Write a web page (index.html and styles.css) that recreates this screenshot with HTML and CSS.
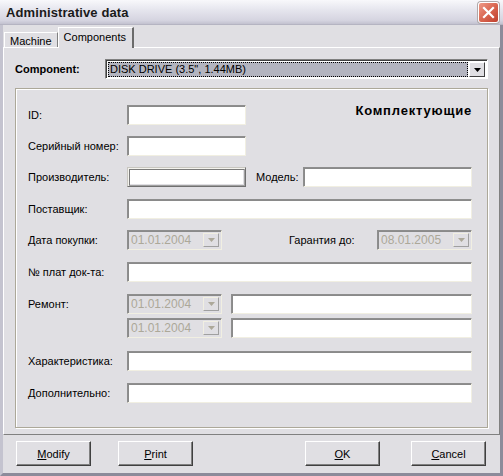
FILE: index.html
```html
<!DOCTYPE html>
<html>
<head>
<meta charset="utf-8">
<link rel="stylesheet" href="styles.css">
</head>
<body>
<div class="window">
  <div class="titlebar">
    <span class="title">Administrative data</span>
    <span class="close"><svg width="13" height="13" viewBox="0 0 13 13"><path d="M2 2 L11 11 M11 2 L2 11" stroke="#fff" stroke-width="2.2" stroke-linecap="square"/></svg></span>
  </div>
  <div class="tabs">
    <div class="tab">Machine</div>
    <div class="tab active">Components</div>
  </div>
  <div class="panel">
    <div class="comp-row">
      <span class="comp-label">Component:</span>
      <div class="combo">
        <div class="combo-val"><span class="focus">DISK DRIVE (3.5", 1.44MB)</span></div>
        <div class="combo-btn"><svg width="7" height="4" viewBox="0 0 7 4"><path d="M0 0H7L3.5 4Z" fill="#000"/></svg></div>
      </div>
    </div>
    <div class="group">
      <div class="row">
        <span class="lbl">ID:</span>
        <div class="inp w-short"></div>
        <span class="heading">Комплектующие</span>
      </div>
      <div class="row t11">
        <span class="lbl">Серийный номер:</span>
        <div class="inp w-short"></div>
      </div>
      <div class="row t11">
        <span class="lbl">Производитель:</span>
        <div class="inp w-short raised"></div>
        <span class="lbl2 model">Модель:</span>
        <div class="inp grow"></div>
      </div>
      <div class="row">
        <span class="lbl">Поставщик:</span>
        <div class="inp grow"></div>
      </div>
      <div class="row t11">
        <span class="lbl">Дата покупки:</span>
        <div class="date"><span class="dtxt">01.01.2004</span><span class="dbtn"><svg width="7" height="4" viewBox="0 0 7 4"><path d="M0 0H7L3.5 4Z" fill="#aca899"/></svg></span></div>
        <span class="lbl2 warranty">Гарантия до:</span>
        <div class="date"><span class="dtxt">08.01.2005</span><span class="dbtn"><svg width="7" height="4" viewBox="0 0 7 4"><path d="M0 0H7L3.5 4Z" fill="#aca899"/></svg></span></div>
      </div>
      <div class="row">
        <span class="lbl">№ плат док-та:</span>
        <div class="inp grow"></div>
      </div>
      <div class="row">
        <span class="lbl">Ремонт:</span>
        <div class="date"><span class="dtxt">01.01.2004</span><span class="dbtn"><svg width="7" height="4" viewBox="0 0 7 4"><path d="M0 0H7L3.5 4Z" fill="#aca899"/></svg></span></div>
        <div class="inp grow repair"></div>
      </div>
      <div class="row t4">
        <span class="lbl"></span>
        <div class="date"><span class="dtxt">01.01.2004</span><span class="dbtn"><svg width="7" height="4" viewBox="0 0 7 4"><path d="M0 0H7L3.5 4Z" fill="#aca899"/></svg></span></div>
        <div class="inp grow repair"></div>
      </div>
      <div class="row t13">
        <span class="lbl">Характеристика:</span>
        <div class="inp grow"></div>
      </div>
      <div class="row">
        <span class="lbl">Дополнительно:</span>
        <div class="inp grow"></div>
      </div>
    </div>
  </div>
  <div class="footer">
    <button class="btn"><u>M</u>odify</button>
    <button class="btn print"><u>P</u>rint</button>
    <button class="btn ok"><u>O</u>K</button>
    <button class="btn cancel"><u>C</u>ancel</button>
  </div>
</div>
</body>
</html>
```
FILE: styles.css
```css
html, body {
  margin: 0;
  padding: 0;
  background: #e0dfe3;
}
.window {
  width: 503px;
  height: 476px;
  box-sizing: border-box;
  background: #e0dfe3;
  border-left: 3px solid #c4c3cf;
  border-right: 3px solid #8c8b9a;
  border-bottom: 3px solid #8c8b9a;
  font-family: "Liberation Sans", Arial, sans-serif;
  font-size: 11px;
  color: #000;
  display: flex;
  flex-direction: column;
}
.titlebar {
  height: 24px;
  margin: 0 -3px;
  background: linear-gradient(#f8f8fb 0%, #e6e6ee 40%, #d5d4e0 85%, #c2c1cf 100%);
  display: flex;
  align-items: center;
  padding: 0 4px 0 6px;
  border-bottom: 1px solid #b5b4c2;
}
.title {
  font-weight: bold;
  font-size: 13px;
  flex: 1;
  color: #1a1a1a;
  letter-spacing: 0.1px;
}
.close {
  width: 21px;
  height: 21px;
  box-sizing: border-box;
  border: 1px solid #fff;
  border-radius: 3px;
  background: linear-gradient(135deg, #ef9a88 0%, #d96650 50%, #c0402e 100%);
  display: flex;
  align-items: center;
  justify-content: center;
  box-shadow: 0 0 0 1px #b0a8a8;
}
.tabs {
  display: flex;
  align-items: flex-end;
  padding-left: 1px;
  height: 22px;
  position: relative;
  z-index: 1;
}
.tab {
  height: 15px;
  box-sizing: border-box;
  padding: 1px 5px 0 5px;
  border-top: 1px solid #fff;
  border-left: 1px solid #fff;
  border-right: 1px solid #808080;
  line-height: 14px;
  background: #e0dfe3;
}
.tab.active {
  height: 21px;
  margin-bottom: -1px;
  padding: 2px 6px 0 5px;
  border-right: 2px solid #6b6b6b;
}
.panel {
  border-top: 1px solid #fff;
  border-left: 1px solid #fff;
  border-right: 1px solid #808080;
  border-bottom: 1px solid #808080;
  padding: 11px 11px 6px 11px;
  height: 388px;
  box-sizing: border-box;
}
.comp-row {
  display: flex;
  align-items: center;
  height: 20px;
}
.comp-label {
  width: 90px;
  font-weight: bold;
}
.combo {
  flex: 1;
  height: 20px;
  box-sizing: border-box;
  border: 1px solid;
  border-color: #808080 #fff #fff #808080;
  box-shadow: inset 1px 1px 0 #404040;
  display: flex;
  padding: 2px 2px 1px 2px;
  background: #fff;
}
.combo-val {
  flex: 1;
  background: #b3b4bf;
  display: flex;
}
.focus {
  flex: 1;
  border: 1px dotted #000;
  line-height: 13px;
  padding-left: 1px;
  color: #000;
}
.combo-btn {
  width: 16px;
  margin-left: 1px;
  box-sizing: border-box;
  border: 1px solid;
  border-color: #fff #404040 #404040 #fff;
  background: #e0dfe3;
  display: flex;
  align-items: center;
  justify-content: center;
}
.group {
  margin-top: 9px;
  height: 340px;
  box-sizing: border-box;
  border: 1px solid #aca899;
  box-shadow: inset 1px 1px 0 #fff, 1px 1px 0 #fff;
  padding: 16px 15px 0 12px;
}
.row {
  display: flex;
  align-items: center;
  height: 20px;
  margin-top: 12px;
}
.row:first-child { margin-top: 0; }
.row.t11 { margin-top: 11px; }
.row.t4 { margin-top: 4px; }
.row.t13 { margin-top: 13px; }
.lbl {
  width: 99px;
  flex: none;
}
.inp {
  height: 20px;
  box-sizing: border-box;
  background: #fff;
  border: 1px solid;
  border-color: #8e8e8e #f1efe2 #f1efe2 #8e8e8e;
  box-shadow: inset 1px 1px 0 #8a8a8a;
}
.w-short { width: 119px; flex: none; }
.grow { flex: 1; }
.inp.raised {
  border-color: #c8c6c0 #707070 #707070 #c8c6c0;
  box-shadow: inset 1px 1px 0 #f4f3ee, inset -1px -1px 0 #a0a0a0, inset 2px 2px 0 #7a7a7a, inset -2px -2px 0 #e0dfe3;
  background: #fff;
}
.heading {
  margin-left: auto;
  font-weight: bold;
  font-size: 13px;
  letter-spacing: 0.8px;
  position: relative;
  top: -5px;
}
.lbl2 { flex: none; }
.model { margin-left: 10px; width: 47px; }
.warranty { margin-left: auto; width: 88px; }
.date {
  width: 95px;
  height: 20px;
  box-sizing: border-box;
  border: 1px solid;
  border-color: #8e8e8e #f1efe2 #f1efe2 #8e8e8e;
  box-shadow: inset 1px 1px 0 #8a8a8a;
  background: #e0dfe3;
  display: flex;
  align-items: stretch;
  padding: 2px 2px 2px 3px;
  flex: none;
}
.dtxt {
  flex: 1;
  color: #aca899;
  font-size: 12px;
  line-height: 15px;
}
.dbtn {
  width: 16px;
  box-sizing: border-box;
  border: 1px solid;
  border-color: #f1efe2 #a0a0a0 #a0a0a0 #f1efe2;
  display: flex;
  align-items: center;
  justify-content: center;
}
.repair { margin-left: 9px; }
.footer {
  display: flex;
  padding: 6px 14px 0 13px;
}
.btn {
  width: 75px;
  flex: none;
  height: 25px;
  box-sizing: border-box;
  background: #e0dfe3;
  border: 1px solid;
  border-color: #fff #404040 #404040 #fff;
  box-shadow: inset -1px -1px 0 #808080;
  font-family: "Liberation Sans", Arial, sans-serif;
  font-size: 11px;
  color: #000;
  padding: 0;
}
.print { margin-left: 27px; }
.ok { margin-left: auto; }
.cancel { margin-left: 31px; }
```
